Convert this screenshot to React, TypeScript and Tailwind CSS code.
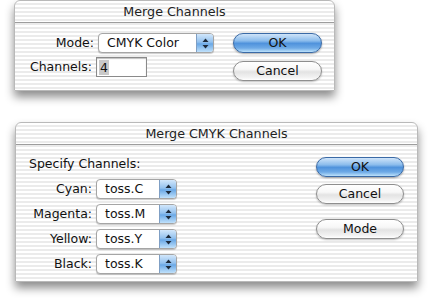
// Two Aqua-style (Mac OS X) dialogs: Merge Channels and Merge CMYK Channels.

const font = "font-['Lucida_Grande','DejaVu_Sans',sans-serif]";

const pinstripe =
  "bg-[repeating-linear-gradient(to_bottom,#ffffff_0px,#ffffff_2px,#ebebeb_2px,#ebebeb_4px)]";

function Dialog({
  title,
  className,
  children,
}: {
  title: string;
  className: string;
  children: React.ReactNode;
}) {
  return (
    <div
      className={`flex flex-col rounded-t-[6px] border border-[#b9b9b9] shadow-[0_6px_10px_rgba(0,0,0,0.45)] ${pinstripe} ${className}`}
    >
      {/* Title bar */}
      <div className="flex h-[22px] shrink-0 items-center justify-center border-b border-[#9d9d9d] text-[12.7px] text-[#222]">
        {title}
      </div>
      {children}
    </div>
  );
}

function AquaButton({
  label,
  primary,
  className = "",
}: {
  label: string;
  primary?: boolean;
  className?: string;
}) {
  const look = primary
    ? "border-[#3a6aa6] bg-[linear-gradient(to_bottom,#cfe4f9_0%,#8bbcec_38%,#4f92dc_52%,#6eaae6_78%,#bde2fb_100%)] shadow-[0_1px_2px_rgba(0,0,0,0.35)]"
    : "border-[#8e8e8e] bg-[linear-gradient(to_bottom,#ffffff_0%,#f7f7f7_40%,#e3e3e3_55%,#f2f2f2_85%,#ffffff_100%)] shadow-[0_1px_2px_rgba(0,0,0,0.25)]";
  return (
    <button
      className={`flex h-[20px] items-center justify-center rounded-full border text-[12.5px] text-[#111] ${look} ${className}`}
    >
      {label}
    </button>
  );
}

function Arrows() {
  return (
    <svg width="7" height="11" viewBox="0 0 7 11">
      <path d="M3.5 0.5 L6.5 4 L0.5 4 Z" fill="#1d2a3a" />
      <path d="M3.5 10.5 L6.5 7 L0.5 7 Z" fill="#1d2a3a" />
    </svg>
  );
}

function Popup({ value, width }: { value: string; width: string }) {
  return (
    <div
      className={`flex h-[20px] overflow-hidden rounded-[4px] border border-[#a5a5a5] bg-white shadow-[0_1px_1px_rgba(0,0,0,0.2)] ${width}`}
    >
      <div className="flex flex-1 items-center pl-[8px] text-[12.5px] text-[#111]">
        {value}
      </div>
      <div className="flex w-[17px] items-center justify-center border-l border-[#7f9fc4] bg-[linear-gradient(to_bottom,#d2e7fb_0%,#93c1ee_45%,#6aa8e6_55%,#c0e1fb_100%)]">
        <Arrows />
      </div>
    </div>
  );
}

function Label({ text, width }: { text: string; width: string }) {
  return (
    <div className={`text-right text-[12.5px] text-[#111] ${width}`}>{text}</div>
  );
}

export default function App() {
  return (
    <div className={`flex h-[304px] w-[431px] flex-col bg-white ${font}`}>
      {/* Merge Channels */}
      <Dialog title="Merge Channels" className="ml-[14px] h-[91px] w-[321px]">
        <div className="flex justify-between pl-[13px] pr-[12px] pt-[10px]">
          <div className="flex flex-col gap-[4px]">
            <div className="flex items-center gap-[4px]">
              <Label text="Mode:" width="w-[66px]" />
              <Popup value="CMYK Color" width="w-[116px]" />
            </div>
            <div className="flex items-center gap-[4px]">
              <Label text="Channels:" width="w-[64px]" />
              <div className="flex h-[20px] w-[51px] items-center border border-[#8a8a8a] bg-white pl-[2px] shadow-[inset_0_1px_1px_rgba(0,0,0,0.25)]">
                <span className="bg-[#c9c9c9] px-[1px] text-[12.5px] leading-[15px] text-[#111]">
                  4
                </span>
              </div>
            </div>
          </div>
          <div className="flex flex-col gap-[8px]">
            <AquaButton label="OK" primary className="w-[89px]" />
            <AquaButton label="Cancel" className="w-[89px]" />
          </div>
        </div>
      </Dialog>

      {/* Merge CMYK Channels */}
      <Dialog
        title="Merge CMYK Channels"
        className="ml-[15px] mt-[31px] h-[160px] w-[403px]"
      >
        <div className="flex justify-between pl-[13px] pr-[13px] pt-[11px]">
          <div className="flex flex-col">
            <div className="h-[16px] text-[12.5px] leading-[16px] text-[#111]">
              Specify Channels:
            </div>
            <div className="mt-[7px] flex flex-col gap-[5px]">
              {[
                ["Cyan:", "toss.C"],
                ["Magenta:", "toss.M"],
                ["Yellow:", "toss.Y"],
                ["Black:", "toss.K"],
              ].map(([label, value]) => (
                <div key={label} className="flex items-center gap-[4px]">
                  <Label text={label} width="w-[63px]" />
                  <Popup value={value} width="w-[81px]" />
                </div>
              ))}
            </div>
          </div>
          <div className="flex flex-col pt-[1px]">
            <AquaButton label="OK" primary className="w-[88px]" />
            <AquaButton label="Cancel" className="mt-[7px] w-[88px]" />
            <AquaButton label="Mode" className="mt-[15px] w-[88px]" />
          </div>
        </div>
      </Dialog>
    </div>
  );
}
